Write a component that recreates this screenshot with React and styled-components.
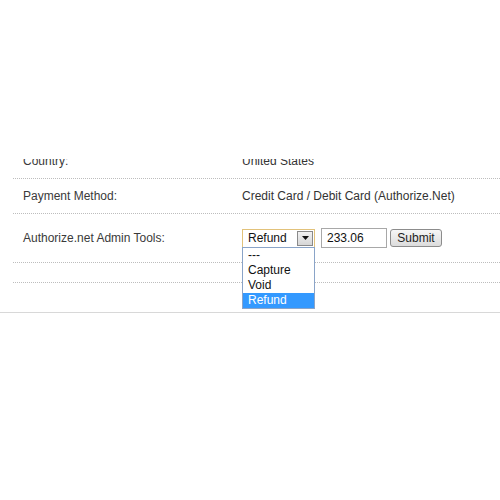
import React from 'react';
import styled, { createGlobalStyle } from 'styled-components';

const GlobalStyle = createGlobalStyle`
  html, body {
    margin: 0;
    padding: 0;
    background: #fff;
  }
  body {
    font-family: "Liberation Sans", Arial, sans-serif;
    font-size: 12px;
    color: #333;
  }
`;

const ROWS = [
  { label: 'Country:', value: 'United States' },
  { label: 'Payment Method:', value: 'Credit Card / Debit Card (Authorize.Net)' }
];

const OPTIONS = ['---', 'Capture', 'Void', 'Refund'];

const Page = styled.div`
  padding-top: 159px;
  width: 500px;
`;

const Panel = styled.div`
  overflow: hidden;
  padding-bottom: 29px;
  border-bottom: 1px solid #d8d8d8;
`;

const Table = styled.div`
  margin: -15px 0 0 13px;
`;

const Row = styled.div`
  display: grid;
  grid-template-columns: 229px 1fr;
  align-items: center;
  padding: ${props => props.tall ? '14px 0 14px' : '10px 0 9px'};
  min-height: ${props => props.empty ? '20px' : '15px'};
  box-sizing: border-box;
  border-bottom: 1px dotted #bdbdbd;
  line-height: 15px;
  ${props => props.empty && 'padding: 0;'}
`;

const Label = styled.div`
  padding-left: 10px;
  color: #3a3a3a;
`;

const Value = styled.div`
  color: #333;
`;

const Tools = styled.div`
  display: flex;
  align-items: center;
`;

const SelectWrap = styled.div`
  position: relative;
  margin-right: 6px;
`;

const SelectBox = styled.div`
  width: 73px;
  height: 19px;
  box-sizing: border-box;
  border: 1px solid #e2c27a;
  display: flex;
  align-items: center;
  justify-content: space-between;
  padding: 0 1px 0 5px;
  color: #111;
  background: #fff;
`;

const ArrowButton = styled.div`
  width: 16px;
  height: 15px;
  box-sizing: border-box;
  border: 1px solid #8a8a8a;
  background: linear-gradient(#f2f2f2, #d6d6d6);
  display: flex;
  align-items: center;
  justify-content: center;
`;

const Options = styled.div`
  position: absolute;
  top: 18px;
  left: 0;
  width: 73px;
  box-sizing: border-box;
  border: 1px solid #8aa4c8;
  background: #fff;
  z-index: 2;
`;

const Option = styled.div`
  height: 15px;
  line-height: 15px;
  padding-left: 5px;
  color: ${props => props.selected ? '#fff' : '#111'};
  background: ${props => props.selected ? '#3399ff' : 'transparent'};
`;

const AmountInput = styled.div`
  width: 66px;
  height: 20px;
  box-sizing: border-box;
  border: 1px solid #a8a8a8;
  padding-left: 5px;
  line-height: 18px;
  color: #111;
  margin-right: 3px;
`;

const SubmitButton = styled.div`
  width: 52px;
  height: 18px;
  box-sizing: border-box;
  border: 1px solid #8c8c8c;
  border-radius: 3px;
  background: linear-gradient(#f6f6f6, #dcdcdc);
  text-align: center;
  line-height: 16px;
  color: #222;
`;

const App = () => {
  return (
    <>
      <GlobalStyle />
      <Page>
        <Panel>
          <Table>
            {ROWS.map(row => (
              <Row key={row.label}>
                <Label>{row.label}</Label>
                <Value>{row.value}</Value>
              </Row>
            ))}
            <Row tall>
              <Label>Authorize.net Admin Tools:</Label>
              <Tools>
                <SelectWrap>
                  <SelectBox>
                    <span>Refund</span>
                    <ArrowButton>
                      <svg width="7" height="4" viewBox="0 0 7 4">
                        <path d="M0 0h7L3.5 4z" fill="#111" />
                      </svg>
                    </ArrowButton>
                  </SelectBox>
                  <Options>
                    {OPTIONS.map(opt => (
                      <Option key={opt} selected={opt === 'Refund'}>{opt}</Option>
                    ))}
                  </Options>
                </SelectWrap>
                <AmountInput>233.06</AmountInput>
                <SubmitButton>Submit</SubmitButton>
              </Tools>
            </Row>
            <Row empty />
          </Table>
        </Panel>
      </Page>
    </>
  );
};

export default App;
